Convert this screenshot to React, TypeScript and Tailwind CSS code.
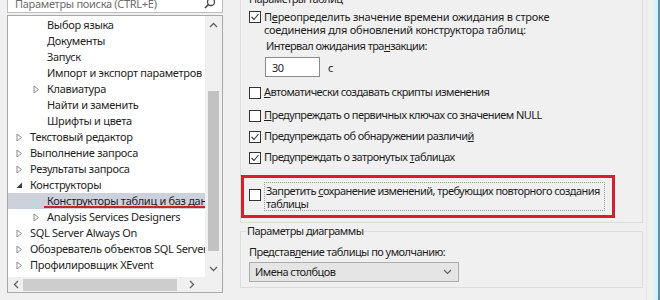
import type { ReactNode } from "react";

const FONT = { fontFamily: '"Noto Sans", "Open Sans", sans-serif' };

interface TreeRow {
  label: string;
  level: number;
  arrow?: "closed" | "open";
  selected?: boolean;
}

const rows: TreeRow[] = [
  { label: "Выбор языка", level: 2 },
  { label: "Документы", level: 2 },
  { label: "Запуск", level: 2 },
  { label: "Импорт и экспорт параметров", level: 2 },
  { label: "Клавиатура", level: 2, arrow: "closed" },
  { label: "Найти и заменить", level: 2 },
  { label: "Шрифты и цвета", level: 2 },
  { label: "Текстовый редактор", level: 1, arrow: "closed" },
  { label: "Выполнение запроса", level: 1, arrow: "closed" },
  { label: "Результаты запроса", level: 1, arrow: "closed" },
  { label: "Конструкторы", level: 1, arrow: "open" },
  { label: "Конструкторы таблиц и баз данных", level: 2, selected: true },
  { label: "Analysis Services Designers", level: 2, arrow: "closed" },
  { label: "SQL Server Always On", level: 1, arrow: "closed" },
  { label: "Обозреватель объектов SQL Server", level: 1, arrow: "closed" },
  { label: "Профилировщик XEvent", level: 1, arrow: "closed" },
  { label: "Среда", level: 1, arrow: "closed" },
];

function Arrow({ kind }: { kind?: "closed" | "open" }) {
  if (!kind) return <span className="w-[13px] shrink-0" />;
  return (
    <span className="w-[13px] shrink-0 flex items-center">
      {kind === "closed" ? (
        <svg width="7" height="9" viewBox="0 0 7 9">
          <path d="M1 1 L5.5 4.5 L1 8 Z" fill="none" stroke="#8a8a8a" strokeWidth="1" />
        </svg>
      ) : (
        <svg width="7" height="7" viewBox="0 0 7 7">
          <path d="M6 0.5 L6 6 L0.5 6 Z" fill="#3c3c3c" />
        </svg>
      )}
    </span>
  );
}

function Tree() {
  return (
    <div className="ml-[7px] mt-[2px] w-[216px] h-[278px] border border-[#a9a9a9] bg-white flex flex-col">
      <div className="flex flex-1 min-h-0">
        <div className="flex-1 overflow-hidden pt-[1px]">
          {rows.map((r) => (
            <div
              key={r.label}
              className={`relative h-[16px] flex items-center whitespace-nowrap text-[11px] tracking-[-0.3px] text-[#1e1e1e] ${r.selected ? "bg-[#cdd1dc]" : ""}`}
              style={{ paddingLeft: r.level === 1 ? 8 : 25 }}
            >
              <Arrow kind={r.arrow} />
              <span className="ml-[1px]">{r.label}</span>
              {r.selected && (
                <span className="absolute left-[36px] right-0 bottom-[1px] h-[2px] bg-[#d01f2f]" />
              )}
            </div>
          ))}
        </div>
        <div className="w-[17px] bg-[#f0f0f0] flex flex-col items-center">
          <span className="h-[17px] flex items-center justify-center">
            <svg width="9" height="6" viewBox="0 0 9 6">
              <path d="M1 5 L4.5 1.5 L8 5" fill="none" stroke="#606060" strokeWidth="1.3" />
            </svg>
          </span>
          <div className="mt-[58px] w-[11px] h-[160px] bg-[#c2c2c2]" />
          <span className="mt-auto h-[17px] flex items-center justify-center">
            <svg width="9" height="6" viewBox="0 0 9 6">
              <path d="M1 1 L4.5 4.5 L8 1" fill="none" stroke="#606060" strokeWidth="1.3" />
            </svg>
          </span>
        </div>
      </div>
      <div className="h-[15px] bg-[#f0f0f0] flex items-center">
        <span className="w-[15px] flex justify-center">
          <svg width="6" height="9" viewBox="0 0 6 9">
            <path d="M5 1 L1.5 4.5 L5 8" fill="none" stroke="#606060" strokeWidth="1.3" />
          </svg>
        </span>
        <div className="w-[154px] h-[12px] bg-[#cdcdcd]" />
        <span className="w-[30px] flex justify-center">
          <svg width="6" height="9" viewBox="0 0 6 9">
            <path d="M1 1 L4.5 4.5 L1 8" fill="none" stroke="#606060" strokeWidth="1.3" />
          </svg>
        </span>
        <div className="flex-1 h-full bg-[#f0f0f0]" />
      </div>
    </div>
  );
}

function Check({ checked }: { checked?: boolean }) {
  return (
    <span className="w-[12px] h-[12px] shrink-0 border border-[#333] bg-white flex items-center justify-center">
      {checked && (
        <svg width="10" height="10" viewBox="0 0 10 10">
          <path d="M1.5 5 L4 7.5 L8.5 2" fill="none" stroke="#333" strokeWidth="1.1" />
        </svg>
      )}
    </span>
  );
}

function CheckRow({ checked, children }: { checked?: boolean; children: ReactNode }) {
  return (
    <div className="flex items-center gap-[3px] h-[21px]">
      <Check checked={checked} />
      <span>{children}</span>
    </div>
  );
}

export default function App() {
  return (
    <div
      className="w-[660px] h-[300px] overflow-hidden bg-[#f0f0f0] flex text-[11px] tracking-[-0.55px] text-[#1e1e1e]"
      style={FONT}
    >
      <div className="w-[223px] shrink-0">
        <div className="ml-[7px] mt-[-10px] w-[216px] h-[23px] border border-[#bdbdbd] bg-white flex items-end pb-[1px] pl-[7px] pr-[6px]">
          <span className="flex-1 text-[#6d6d6d] leading-[14px] tracking-[-0.3px]">
            Параметры поиска (CTRL+E)
          </span>
          <svg width="12" height="12" viewBox="0 0 12 12" className="mb-[2px]">
            <circle cx="7" cy="5" r="3.5" fill="none" stroke="#444" strokeWidth="1.3" />
            <path d="M4.5 7.5 L1 11" stroke="#444" strokeWidth="1.6" />
          </svg>
        </div>
        <Tree />
      </div>

      <div className="flex-1 flex">
        <div className="ml-[17px] w-[403px] flex flex-col">
          <fieldset className="mt-[-9px] h-[232px] border border-[#dcdcdc] pl-[8px]">
            <legend className="ml-[-1px] px-[1px] leading-[16px]">Параметры таблиц</legend>
            <div className="mt-[3px] flex gap-[3px]">
              <span className="mt-[1px]"><Check checked /></span>
              <div className="leading-[13px]">
                <div className="tracking-[-0.25px]">
                  П<u>е</u>реопределить значение времени ожидания в строке
                </div>
                <div className="tracking-[-0.25px]">соединения для обновлений конструктора таблиц:</div>
                <div className="mt-[3px] ml-[2px]">
                  Интервал ожидания тра<u>н</u>закции:
                </div>
                <div className="mt-[5px] flex items-center gap-[8px]">
                  <div className="ml-[1px] w-[55px] h-[20px] border border-[#8a8a8a] bg-white pl-[6px] flex items-center">
                    30
                  </div>
                  <span>с</span>
                </div>
              </div>
            </div>
            <div className="mt-[5px]">
              <CheckRow>
                <u>А</u>втоматически создавать скрипты изменения
              </CheckRow>
              <div className="h-[2px]" />
              <CheckRow>
                <u>П</u>редупреждать о первичных ключах со значением NULL
              </CheckRow>
              <CheckRow checked>
                Предупреждать об обнаружении различи<u>й</u>
              </CheckRow>
              <CheckRow checked>
                Предупреждать о затронутых <u>т</u>аблицах
              </CheckRow>
            </div>
            <div className="mt-[7px] ml-[-8px] w-[374px] h-[43px] border-[3px] border-[#d3202c] pl-[5px] pt-[4px] flex gap-[3px]">
              <span className="mt-[7px]"><Check /></span>
              <div className="flex-1 mr-[7px] h-[29px] border border-dotted border-[#9a9a9a] leading-[13px] pl-[1px] pt-[1px] whitespace-nowrap">
                Запретить <u>с</u>охранение изменений, требующих повторного создания
                <br />
                таблицы
              </div>
            </div>
          </fieldset>
          <fieldset className="mt-[0px] h-[65px] border border-[#dcdcdc] pl-[8px]">
            <legend className="ml-[-3px] px-[1px] leading-[16px]">Параметры диаграммы</legend>
            <div className="mt-[6px] leading-[14px]">
              Представ<u>л</u>ение таблицы по умолчанию:
            </div>
            <div className="mt-[3px] w-[210px] h-[20px] border border-[#acacac] bg-[#e5e5e5] flex items-center pl-[5px] pr-[6px]">
              <span className="flex-1">Имена столбцов</span>
              <svg width="9" height="6" viewBox="0 0 9 6">
                <path d="M1 1 L4.5 4.5 L8 1" fill="none" stroke="#606060" strokeWidth="1.2" />
              </svg>
            </div>
          </fieldset>
        </div>
        <div className="ml-[3px] w-[1px] bg-[#e6e6ee]" />
        <div className="ml-[4px] w-[7px] bg-gradient-to-r from-[#eef6f2] to-[#cdeef8]" />
        <div className="w-[3px] bg-[#5b8fa6]" />
      </div>
    </div>
  );
}
